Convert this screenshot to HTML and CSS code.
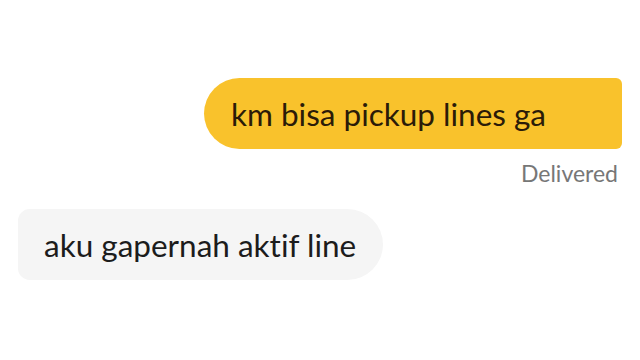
FILE: index.html
```html
<!DOCTYPE html>
<html>
<head>
<meta charset="utf-8">
<link rel="stylesheet" href="styles.css">
</head>
<body>
<div class="chat">
  <div class="row out">
    <div class="bubble yellow">km bisa pickup lines ga</div>
  </div>
  <div class="status">Delivered</div>
  <div class="row in">
    <div class="bubble grey">aku gapernah aktif line</div>
  </div>
</div>
</body>
</html>
```
FILE: styles.css
```css
html, body {
  margin: 0;
  padding: 0;
  background: #ffffff;
  width: 640px;
  height: 360px;
  overflow: hidden;
}
.chat {
  display: flex;
  flex-direction: column;
  padding: 78px 18px 0 18px;
  font-family: "Lato", "Noto Sans", sans-serif;
  font-variant-ligatures: none;
}
.row {
  display: flex;
}
.row.out {
  justify-content: flex-end;
}
.row.in {
  justify-content: flex-start;
}
.bubble {
  height: 71px;
  display: flex;
  align-items: center;
  font-size: 31.5px;
  box-sizing: border-box;
}
.yellow {
  background: #f9c22c;
  color: #2b1b08;
  border-radius: 36px 6px 6px 36px;
  padding: 0 76px 0 27px;
}
.grey {
  background: #f5f5f5;
  color: #1c1c1c;
  border-radius: 12px 36px 36px 12px;
  padding: 0 27px 0 26px;
}
.status {
  align-self: flex-end;
  margin: 10px 4px 22px 0;
  font-size: 23px;
  color: #777777;
}
```
